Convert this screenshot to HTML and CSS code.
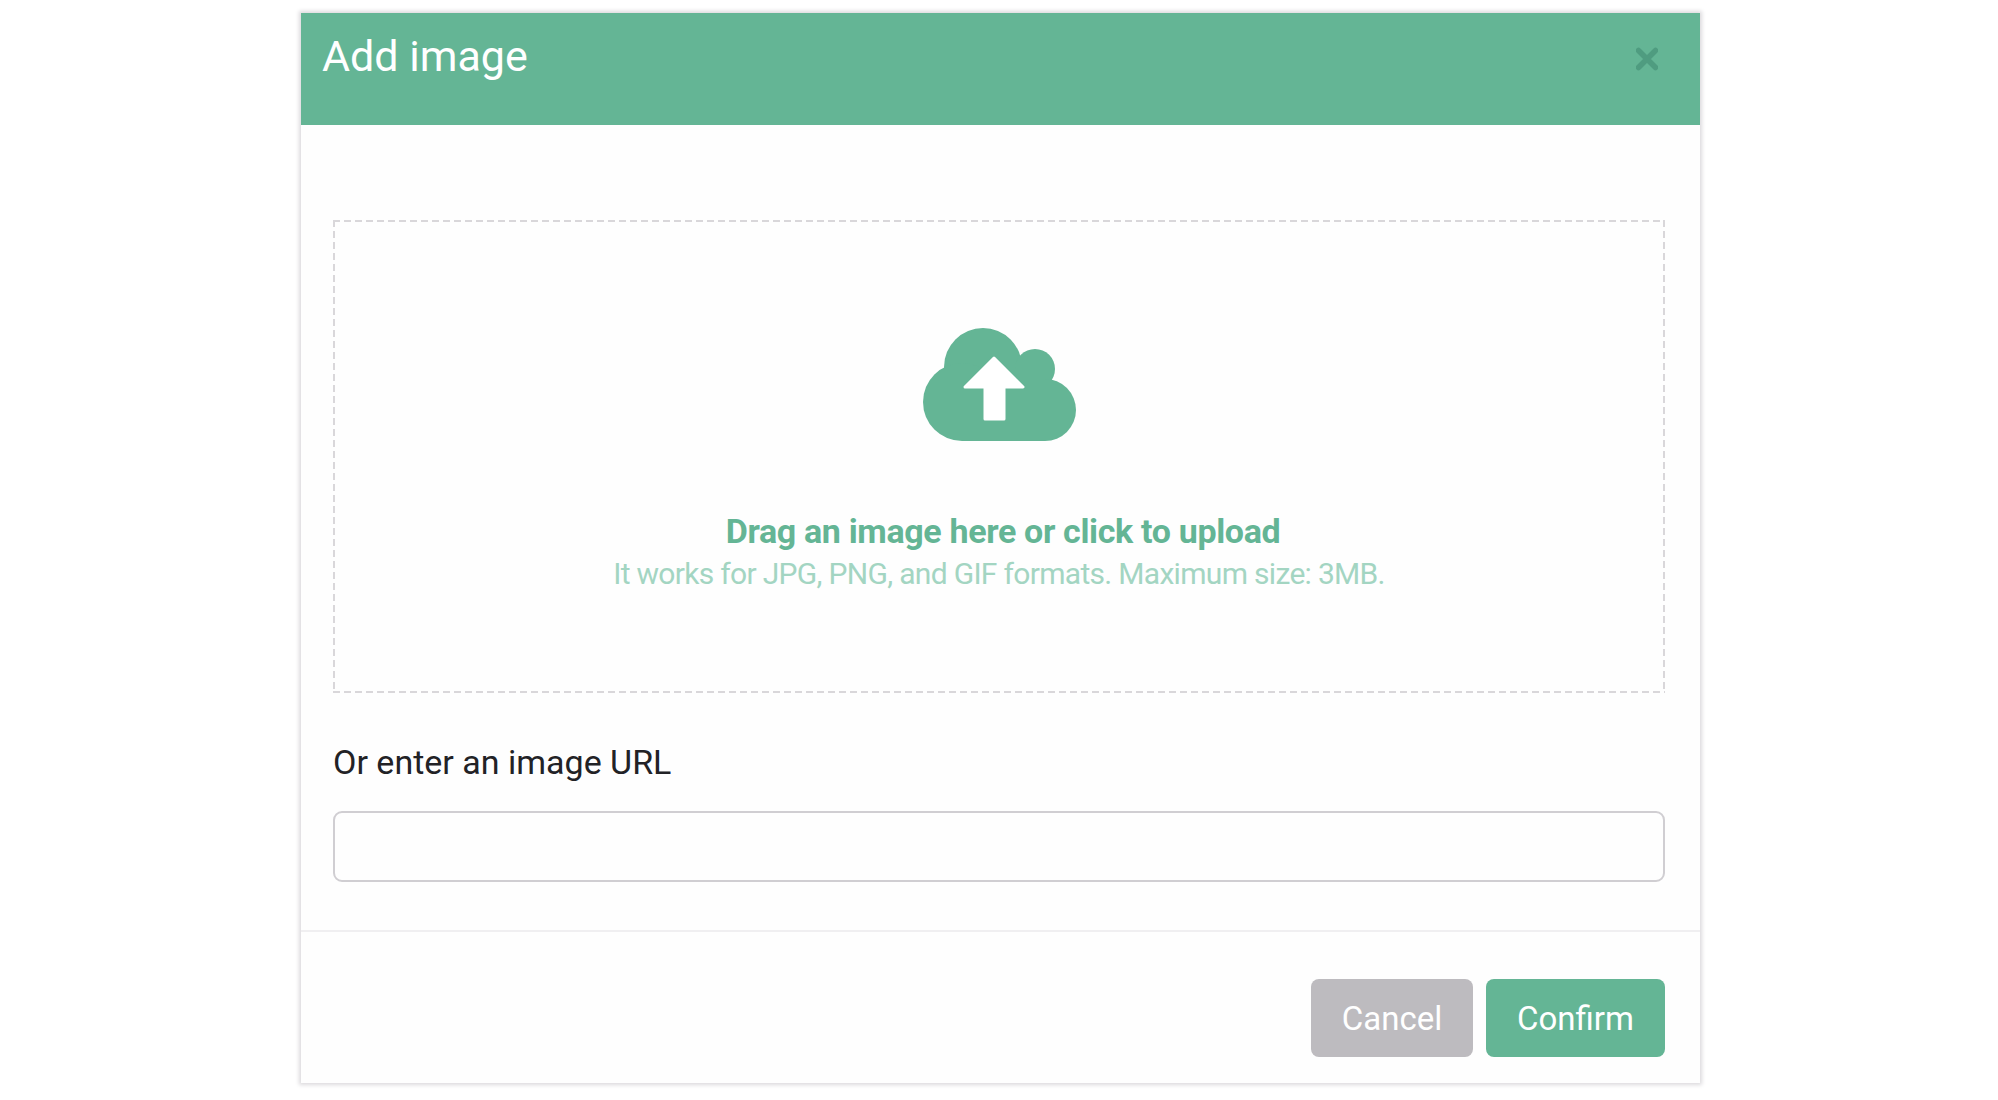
FILE: index.html
```html
<!DOCTYPE html>
<html lang="en">
<head>
    <meta charset="UTF-8">
    <meta name="viewport" content="width=device-width, initial-scale=1.0">
    <title>Add image</title>
    <link rel="stylesheet" href="styles.css">
</head>
<body>
    <div class="modal">
        <div class="modal-header">
            <h1 class="modal-title">Add image</h1>
            <button class="close-button" aria-label="Close">
                <svg width="22" height="24" viewBox="0 0 22 24">
                    <path d="M2.5 3.5 L19.5 20.5 M19.5 3.5 L2.5 20.5" fill="none" stroke="#4f9c80" stroke-width="5.5" stroke-linecap="round"/>
                </svg>
            </button>
        </div>
        <div class="modal-body">
            <div class="dropzone">
                <svg class="cloud" width="153" height="113" viewBox="23 18 153 113">
                    <g fill="#64b595">
                        <circle cx="83" cy="57" r="39"/>
                        <circle cx="135" cy="59" r="20"/>
                        <circle cx="62" cy="92" r="39"/>
                        <circle cx="145" cy="100" r="31"/>
                        <rect x="62" y="60" width="83" height="71"/>
                    </g>
                    <path d="M94 48 L123 77 L104 77 L104 109 L85 109 L85 77 L65 77 Z" fill="#fff" stroke="#fff" stroke-width="3" stroke-linejoin="round"/>
                </svg>
                <div class="drop-title">Drag an image here or click to upload</div>
                <div class="drop-hint">It works for JPG, PNG, and GIF formats. Maximum size: 3MB.</div>
            </div>
            <label class="url-label" for="imageUrl">Or enter an image URL</label>
            <input id="imageUrl" class="url-input" type="text">
        </div>
        <div class="modal-footer">
            <button class="button cancel">Cancel</button>
            <button class="button confirm">Confirm</button>
        </div>
    </div>
</body>
</html>
```

FILE: styles.css
```css
body {
    font-family: Roboto, Arial, sans-serif;
    background-color: #fff;
    margin: 0;
    padding: 13px 0 0 301px;
    min-height: 1100px;
    box-sizing: border-box;
}
.modal {
    width: 1399px;
    height: 1070px;
    background-color: #fefefe;
    box-shadow: 0 0 4px 2px #dcdadd;
    display: flex;
    flex-direction: column;
}
.modal-header {
    height: 112px;
    background-color: #64b595;
    display: flex;
    justify-content: space-between;
    align-items: flex-start;
    padding: 0 42px 0 21px;
    box-sizing: border-box;
}
.modal-title {
    margin: 15px 0 0;
    font-size: 43px;
    line-height: 56px;
    font-weight: 400;
    color: #fff;
}
.close-button {
    margin-top: 34px;
    padding: 0;
    border: none;
    background: none;
    line-height: 0;
    cursor: pointer;
}
.modal-body {
    padding: 95px 35px 0 32px;
    flex: 1;
}
.dropzone {
    height: 473px;
    box-sizing: border-box;
    background:
        linear-gradient(to right, #d9d7da 7px, transparent 0) 0 0 / 11px 2px repeat-x,
        linear-gradient(to right, #d9d7da 7px, transparent 0) 0 100% / 11px 2px repeat-x,
        linear-gradient(to bottom, #d9d7da 7px, transparent 0) 0 0 / 2px 11px repeat-y,
        linear-gradient(to bottom, #d9d7da 7px, transparent 0) 100% 0 / 2px 11px repeat-y;
    display: flex;
    flex-direction: column;
    align-items: center;
    padding-top: 108px;
}
.drop-title {
    margin: 68px 0 0 8px;
    font-size: 34px;
    line-height: 44px;
    font-weight: 700;
    letter-spacing: -0.35px;
    color: #64b595;
}
.drop-hint {
    margin-top: 1px;
    font-size: 30px;
    line-height: 40px;
    letter-spacing: -0.69px;
    color: #a3d5c2;
}
.url-label {
    display: block;
    margin-top: 47px;
    font-size: 34px;
    line-height: 44px;
    color: #222226;
}
.url-input {
    display: block;
    width: 100%;
    height: 71px;
    margin-top: 27px;
    box-sizing: border-box;
    border: 2px solid #d0ced2;
    border-radius: 9px;
    background: none;
    outline: none;
}
.modal-footer {
    border-top: 2px solid #f0eff1;
    height: 153px;
    box-sizing: border-box;
    display: flex;
    justify-content: flex-end;
    gap: 13px;
    padding: 47px 35px 0 0;
}
.button {
    height: 78px;
    border: none;
    border-radius: 8px;
    font-family: Roboto, Arial, sans-serif;
    font-size: 33px;
    color: #fff;
    cursor: pointer;
}
.cancel {
    width: 162px;
    background-color: #bdbbbf;
}
.confirm {
    width: 179px;
    background-color: #64b595;
}
```
